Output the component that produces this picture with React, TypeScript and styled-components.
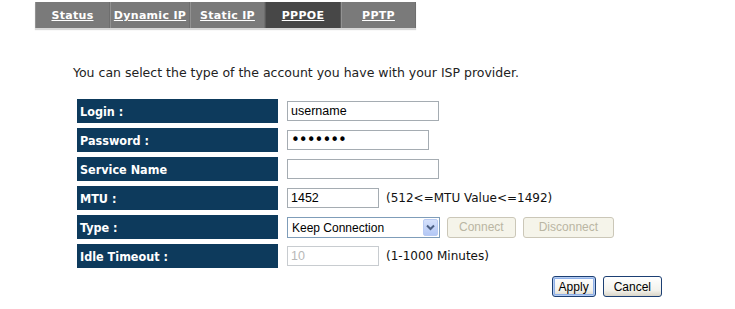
import styled, { createGlobalStyle } from "styled-components";

const GlobalStyle = createGlobalStyle`
  body {
    margin: 0;
    background: #ffffff;
    font-family: "DejaVu Sans", Verdana, sans-serif;
  }
`;

const Page = styled.div`
  width: 735px;
  height: 309px;
  padding: 2px 0 0 35px;
  box-sizing: border-box;
`;

const TabBar = styled.div`
  display: flex;
  width: 381px;
  height: 26px;
  background: #7a7a7a;
  box-shadow: 0 2px 1px #d8d8d8;
`;

const Tab = styled.a<{ $w: number; $active?: boolean }>`
  flex: 0 0 ${(p) => p.$w}px;
  display: flex;
  align-items: center;
  justify-content: center;
  box-sizing: border-box;
  background: ${(p) => (p.$active ? "#474747" : "#7a7a7a")};
  border-left: 1px solid ${(p) => (p.$active ? "#5a5a5a" : "#929292")};
  border-right: 1px solid ${(p) => (p.$active ? "#5a5a5a" : "#6e6e6e")};
  color: #ffffff;
  font-family: "DejaVu Sans", Verdana, sans-serif;
  font-weight: bold;
  font-size: 11px;
  letter-spacing: 0.3px;
  text-decoration: underline;
  padding-top: 1px;
  cursor: pointer;
`;

const Intro = styled.p`
  margin: 37px 0 0 38px;
  font-size: 12.5px;
  line-height: 15px;
  color: #222222;
`;

const Form = styled.div`
  margin: 19px 0 0 42px;
  width: 585px;
`;

const Grid = styled.div`
  display: grid;
  grid-template-columns: 201px 1fr;
  grid-auto-rows: 24px;
  column-gap: 9px;
  row-gap: 5px;
`;

const Label = styled.div`
  background: #0d3a5c;
  color: #ffffff;
  font-family: "DejaVu Sans Condensed", "DejaVu Sans", sans-serif;
  font-weight: bold;
  font-size: 12.5px;
  display: flex;
  align-items: center;
  padding-left: 3px;
  padding-top: 1px;
`;

const Value = styled.div`
  display: flex;
  align-items: center;
  gap: 7px;
`;

const TextBox = styled.input<{ $w: number }>`
  width: ${(p) => p.$w}px;
  height: 20px;
  box-sizing: border-box;
  border: 1px solid #a5acb2;
  padding: 0 3px;
  font-family: "Liberation Sans", Arial, sans-serif;
  font-size: 12.5px;
  color: #000000;
  background: #ffffff;
  outline: none;

  &[type="password"] {
    font-family: "DejaVu Sans", sans-serif;
    font-size: 15px;
    letter-spacing: -1px;
  }

  &:disabled {
    color: #b8b8b8;
    border-color: #c8ccd0;
    background: #ffffff;
  }
`;

const Hint = styled.span`
  font-size: 12px;
  color: #111111;
`;

const SelectWrap = styled.div`
  display: flex;
  align-items: center;
  width: 153px;
  height: 21px;
  box-sizing: border-box;
  border: 1px solid #7f9db9;
  background: #ffffff;
`;

const Select = styled.select`
  flex: 1;
  min-width: 0;
  height: 19px;
  border: none;
  appearance: none;
  background: transparent;
  padding: 2px 4px 0;
  font-family: "Liberation Sans", Arial, sans-serif;
  font-size: 12px;
  color: #000000;
  outline: none;
`;

const Arrow = styled.span`
  flex: 0 0 15px;
  height: 17px;
  margin-right: 1px;
  box-sizing: border-box;
  border: 1px solid #b9cbf3;
  border-radius: 2px;
  background: linear-gradient(#d5e1fc, #b4c8f5);
  display: flex;
  align-items: center;
  justify-content: center;
`;

const FlatButton = styled.button<{ $pad?: number }>`
  height: 21px;
  box-sizing: border-box;
  border: 1px solid #cbc7b8;
  border-radius: 3px;
  background: #f5f4ea;
  color: #bab6a3;
  font-family: "Liberation Sans", Arial, sans-serif;
  font-size: 12px;
  padding: 0 ${(p) => p.$pad ?? 10}px;
`;

const Buttons = styled.div`
  display: flex;
  justify-content: flex-end;
  gap: 7px;
  margin-top: 8px;
`;

const XpButton = styled.button<{ $default?: boolean; $pad: number }>`
  height: 21px;
  box-sizing: border-box;
  border: 1px solid #1c3f73;
  border-radius: 3px;
  background: linear-gradient(#ffffff, #f3f2ec 70%, #d9d5c8);
  box-shadow: ${(p) =>
    p.$default ? "inset 0 0 0 1px #b6cdf2, inset 0 0 0 2px #8fb0e8" : "none"};
  color: #000000;
  font-family: "Liberation Sans", Arial, sans-serif;
  font-size: 12px;
  padding: 0 ${(p) => p.$pad}px;
`;

const rows = ["Login :", "Password :", "Service Name", "MTU :", "Type :", "Idle Timeout :"];

function App() {
  return (
    <Page>
      <GlobalStyle />
      <TabBar>
        <Tab $w={75}>Status</Tab>
        <Tab $w={80}>Dynamic IP</Tab>
        <Tab $w={75}>Static IP</Tab>
        <Tab $w={76} $active>
          PPPOE
        </Tab>
        <Tab $w={75}>PPTP</Tab>
      </TabBar>
      <Intro>You can select the type of the account you have with your ISP provider.</Intro>
      <Form>
        <Grid>
          <Label>{rows[0]}</Label>
          <Value>
            <TextBox $w={152} defaultValue="username" />
          </Value>
          <Label>{rows[1]}</Label>
          <Value>
            <TextBox $w={142} type="password" defaultValue="1234567" />
          </Value>
          <Label>{rows[2]}</Label>
          <Value>
            <TextBox $w={152} defaultValue="" />
          </Value>
          <Label>{rows[3]}</Label>
          <Value>
            <TextBox $w={92} defaultValue="1452" />
            <Hint>(512&lt;=MTU Value&lt;=1492)</Hint>
          </Value>
          <Label>{rows[4]}</Label>
          <Value>
            <SelectWrap>
              <Select defaultValue="keep">
                <option value="keep">Keep Connection</option>
                <option value="demand">Connect on Demand</option>
                <option value="manual">Manual</option>
              </Select>
              <Arrow>
                <svg width="9" height="7" viewBox="0 0 9 7">
                  <path d="M1 1.5 L4.5 5 L8 1.5" fill="none" stroke="#4d6185" strokeWidth="2" />
                </svg>
              </Arrow>
            </SelectWrap>
            <FlatButton disabled $pad={11}>
              Connect
            </FlatButton>
            <FlatButton disabled $pad={15}>
              Disconnect
            </FlatButton>
          </Value>
          <Label>{rows[5]}</Label>
          <Value>
            <TextBox $w={92} defaultValue="10" disabled />
            <Hint>(1-1000 Minutes)</Hint>
          </Value>
        </Grid>
        <Buttons>
          <XpButton $default $pad={6}>
            Apply
          </XpButton>
          <XpButton $pad={10}>Cancel</XpButton>
        </Buttons>
      </Form>
    </Page>
  );
}

export default App;
